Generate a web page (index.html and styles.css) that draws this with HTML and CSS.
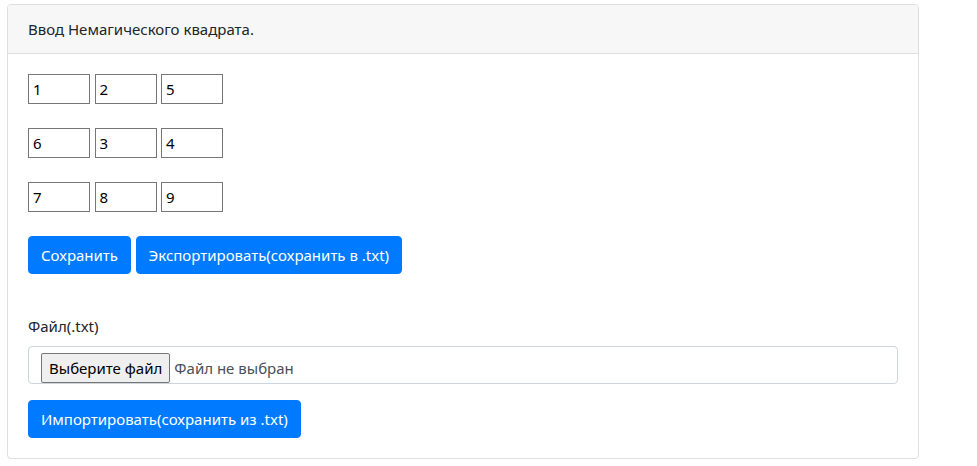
FILE: index.html
```html
<!DOCTYPE html>
<html lang="ru">
<head>
<meta charset="utf-8">
<title>Немагический квадрат</title>
<link rel="stylesheet" href="styles.css">
</head>
<body>
<div class="card">
  <div class="card-header">Ввод Немагического квадрата.</div>
  <div class="card-body">
    <div class="square">
      <div class="square-row">
        <input class="cell" type="text" value="1">
        <input class="cell" type="text" value="2">
        <input class="cell" type="text" value="5">
      </div>
      <div class="square-row">
        <input class="cell" type="text" value="6">
        <input class="cell" type="text" value="3">
        <input class="cell" type="text" value="4">
      </div>
      <div class="square-row">
        <input class="cell" type="text" value="7">
        <input class="cell" type="text" value="8">
        <input class="cell" type="text" value="9">
      </div>
    </div>
    <div class="actions">
      <button class="btn" type="button">Сохранить</button>
      <button class="btn" type="button">Экспортировать(сохранить в .txt)</button>
    </div>
    <div class="form-group">
      <label class="label">Файл(.txt)</label>
      <div class="file-control">
        <span class="file-btn">Выберите файл</span>
        <span class="file-name">Файл не выбран</span>
      </div>
    </div>
    <button class="btn" type="button">Импортировать(сохранить из .txt)</button>
  </div>
</div>
</body>
</html>
```

FILE: styles.css
```css
* {
  box-sizing: border-box;
}

html, body {
  background: #fff;
}

body {
  margin: 0;
  padding: 4px 0 0 7px;
  font-family: "Noto Sans", "Open Sans", sans-serif;
  font-size: 15px;
  line-height: 24px;
  color: #212529;
}

.card {
  width: 912px;
  border: 1px solid #dfdfdf;
  border-radius: 4px;
  background: #fff;
}

.card-header {
  padding: 12px 20px;
  background: #f7f7f7;
  border-bottom: 1px solid #dfdfdf;
  border-radius: 3px 3px 0 0;
}

.card-body {
  padding: 20px;
  display: flex;
  flex-direction: column;
  align-items: flex-start;
}

.square {
  display: flex;
  flex-direction: column;
  gap: 24px;
}

.square-row {
  display: flex;
  gap: 4.5px;
}

.cell {
  width: 62px;
  height: 30px;
  margin: 0;
  padding: 2px 4px;
  border: 1px solid #767676;
  border-radius: 0;
  font-family: inherit;
  font-size: 15px;
  line-height: 24px;
  color: #000;
  background: #fff;
}

.actions {
  margin-top: 24px;
  display: flex;
  gap: 4.5px;
}

.btn {
  height: 38px;
  margin: 0;
  padding: 6px 12px;
  border: 1px solid #007bff;
  border-radius: 4px;
  background: #007bff;
  color: #fff;
  font-family: inherit;
  font-size: 15px;
  line-height: 24px;
  white-space: nowrap;
}

.form-group {
  margin-top: 40px;
  margin-bottom: 16px;
  width: 100%;
  display: flex;
  flex-direction: column;
}

.label {
  margin-bottom: 8px;
}

.file-control {
  width: 100%;
  height: 38px;
  padding: 6px 12px;
  border: 1px solid #ced4da;
  border-radius: 4px;
  display: flex;
  align-items: flex-start;
  color: #495057;
}

.file-btn {
  height: 30px;
  padding: 0 7px;
  border: 1px solid #767676;
  border-radius: 2px;
  background: #efefef;
  color: #000;
  line-height: 28px;
  white-space: nowrap;
}

.file-name {
  margin-left: 4px;
  line-height: 30px;
  white-space: nowrap;
}
```
